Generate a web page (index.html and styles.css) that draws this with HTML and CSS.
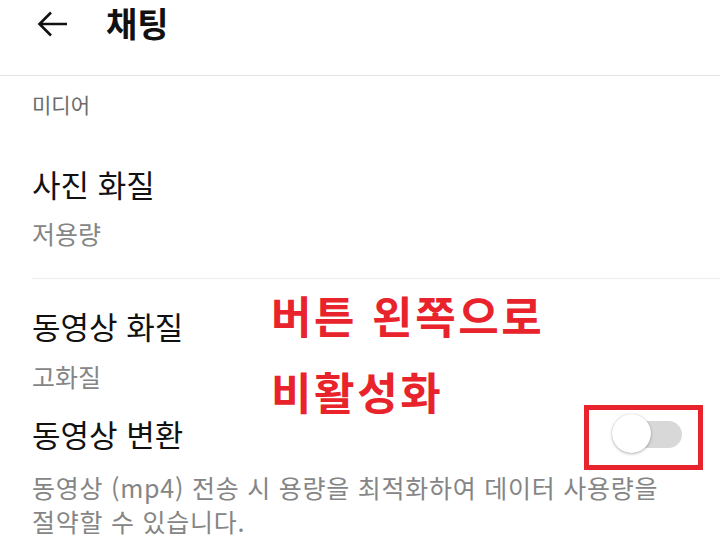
FILE: index.html
```html
<!DOCTYPE html>
<html lang="ko">
<head>
<meta charset="utf-8">
<title>채팅</title>
<link rel="stylesheet" href="styles.css">
</head>
<body>
<div class="page">
  <header class="header">
    <div class="topbar">
      <svg class="back" width="32" height="28" viewBox="0 0 32 28" aria-hidden="true">
        <path d="M30 14 H3 M14 2.5 L2.5 14 L14 25.5" fill="none" stroke="#111" stroke-width="2.6" stroke-linecap="butt" stroke-linejoin="miter"/>
      </svg>
      <h1 class="title">채팅</h1>
    </div>
  </header>

  <main class="content">
    <div class="section-label">미디어</div>

    <div class="item item-first">
      <div class="item-title">사진 화질</div>
      <div class="item-sub">저용량</div>
    </div>

    <div class="divider"></div>

    <div class="item item-second">
      <div class="item-title">동영상 화질</div>
      <div class="item-sub">고화질</div>
    </div>

    <div class="item item-third">
      <div class="row">
        <div class="item-title">동영상 변환</div>
        <div class="toggle"><span class="track"></span><span class="thumb"></span></div>
      </div>
      <div class="item-desc">동영상 (mp4) 전송 시 용량을 최적화하여 데이터 사용량을<br>절약할 수 있습니다.</div>
    </div>
  </main>

  <div class="note">버튼 왼쪽으로<br>비활성화</div>
  <div class="mark"></div>
</div>
</body>
</html>
```
FILE: styles.css
```css
html, body {
  margin: 0;
  padding: 0;
  background: #ffffff;
}
body {
  font-family: "Noto Sans CJK KR", "Noto Sans", Roboto, sans-serif;
  color: #111111;
}
.page {
  position: relative;
  width: 720px;
  height: 540px;
  overflow: hidden;
}
.header {
  height: 76px;
  box-sizing: border-box;
  border-bottom: 1px solid #e4e4e4;
  padding-left: 37px;
}
.topbar {
  height: 48px;
  display: flex;
  align-items: center;
}
.back {
  display: block;
  margin-top: -1px;
}
.title {
  margin: 0 0 0 37px;
  font-size: 34px;
  font-weight: 700;
  line-height: 48px;
  color: #111111;
  position: relative;
  top: -1px;
}
.content {
  padding-left: 32px;
}
.section-label {
  margin-top: 14px;
  font-size: 21px;
  line-height: 28px;
  color: #6b6b6b;
}
.item-title {
  font-size: 31px;
  line-height: 40px;
  color: #111111;
}
.item-sub {
  font-size: 25px;
  line-height: 30px;
  color: #858585;
}
.item-first {
  margin-top: 46px;
}
.item-first .item-sub {
  margin-top: 14px;
}
.divider {
  margin-top: 30px;
  height: 1px;
  background: #ececec;
}
.item-second {
  margin-top: 27px;
}
.item-second .item-sub {
  margin-top: 15px;
}
.item-third {
  margin-top: 23px;
}
.row {
  display: flex;
  align-items: center;
  justify-content: space-between;
  padding-right: 38px;
}
.item-desc {
  margin-top: 16px;
  font-size: 25px;
  line-height: 34px;
  color: #858585;
  letter-spacing: 0.75px;
}
.toggle {
  position: relative;
  width: 70px;
  height: 40px;
}
.track {
  position: absolute;
  left: 6px;
  right: 0;
  top: 7px;
  height: 27px;
  border-radius: 14px;
  background: #d8d8d8;
}
.thumb {
  position: absolute;
  left: 0;
  top: 0;
  width: 39px;
  height: 39px;
  border-radius: 50%;
  background: #ffffff;
  box-shadow: 0 1px 3px rgba(0, 0, 0, 0.28), 0 0 1px rgba(0, 0, 0, 0.2);
}
.note {
  position: absolute;
  left: 271px;
  top: 277px;
  font-size: 44px;
  font-weight: 700;
  line-height: 76px;
  color: #e8232b;
  letter-spacing: 2.6px;
}
.mark {
  position: absolute;
  left: 584px;
  top: 405px;
  width: 119px;
  height: 65px;
  box-sizing: border-box;
  border: 5px solid #e8232b;
}
```
